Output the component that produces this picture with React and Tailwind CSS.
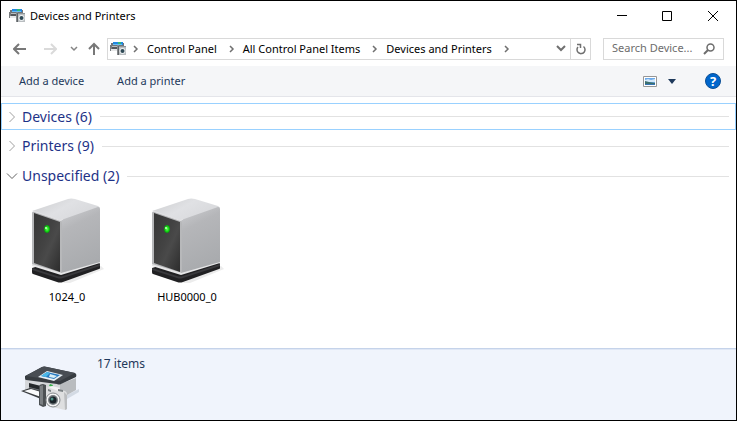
import { useState } from 'react'

const CRUMBS = ['Control Panel', 'All Control Panel Items', 'Devices and Printers']

const GROUPS = [
  { id: 'devices', name: 'Devices', count: 6, items: [] },
  { id: 'printers', name: 'Printers', count: 9, items: [] },
  { id: 'unspecified', name: 'Unspecified', count: 2, items: ['1024_0', 'HUB0000_0'] },
]

// small printer + camera icon
function AppIcon() {
  return (
    <svg width="16" height="14" viewBox="0 0 16 14" className="shrink-0" aria-hidden="true">
      <path d="M1 1h13v3H1z" fill="#6f7478" />
      <path d="M3 0h10v3H3z" fill="#2387e0" />
      <path d="M8 0h3v2H8z" fill="#2fb878" />
      <path d="M3 2h9v1H3z" fill="#67c0f5" />
      <path d="M0 4h15v1H0z" fill="#b9bcbf" />
      <path d="M0 3h2v6H0z" fill="#777b7e" />
      <path d="M2 5h5v2H2z" fill="#54585b" />
      <path d="M1 7h6v2H1z" fill="#e6e7e8" />
      <path d="M7 3h2v10H7z" fill="#85898c" />
      <path d="M8 4h1v9H8z" fill="#5f6366" />
      <path d="M9 4h7v9H9z" fill="#b9bdc0" />
      <path d="M9 4h7v1H9z" fill="#8f9598" />
      <circle cx="12.500" cy="9" r="3" fill="#edf0f1" />
      <circle cx="12.500" cy="9" r="2" fill="#2f4a56" />
    </svg>
  )
}

function Chevron({ className = '' }) {
  return (
    <svg width="6" height="8" viewBox="0 0 6 8" className={className} fill="none" stroke="#707070" strokeWidth="1.500" aria-hidden="true">
      <path d="M1 1l3 3-3 3" />
    </svg>
  )
}

function DeviceIcon() {
  return (
    <svg width="78" height="88" viewBox="0 0 78 88" aria-hidden="true">
      <defs>
        <linearGradient id="top" x1="0" y1="0" x2="1" y2="0.600">
          <stop offset="0" stopColor="#cbccce" />
          <stop offset="0.500" stopColor="#e0e1e4" />
          <stop offset="1" stopColor="#d6d7da" />
        </linearGradient>
        <linearGradient id="side" x1="0" y1="0" x2="0.300" y2="1">
          <stop offset="0" stopColor="#cfd0d3" />
          <stop offset="0.350" stopColor="#b5b6b9" />
          <stop offset="1" stopColor="#a9abae" />
        </linearGradient>
        <linearGradient id="front" x1="0" y1="0" x2="1" y2="1">
          <stop offset="0" stopColor="#363636" />
          <stop offset="0.450" stopColor="#434343" />
          <stop offset="0.600" stopColor="#4a4a4a" />
          <stop offset="1" stopColor="#2c2c2c" />
        </linearGradient>
        <radialGradient id="led">
          <stop offset="0" stopColor="#6dff5d" />
          <stop offset="0.600" stopColor="#14dc14" />
          <stop offset="1" stopColor="#108a14" />
        </radialGradient>
      </defs>
      {/* base */}
      <path d="M34 86l8 0 34-14-3-3z" fill="#ececec" />
      <path d="M4 71l27-8 40 3q1 0 1 1v4q0 1-1 1L35 85q-3 1-6 0L5 77q-1 0-1-2z" fill="#212123" />
      <path d="M4 71l25 8q3 1 6 0l37-12v2L35 81q-3 1-6 0L4 73z" fill="#3a3a3d" />
      {/* case */}
      <path d="M4 66l29 9 39-11v2L33 78 4 69z" fill="#e6e6e7" />
      <path d="M4 14L40 2q3-1 7 0l23 7q2 1 2 3L33 26z" fill="url(#top)" />
      <path d="M32 27q0-4 4-5l34-12q2 0 2 2v53L33 76z" fill="url(#side)" />
      <path d="M4 16q0-2 3-1l24 8q3 1 3 4v49L4 67z" fill="#b7b8ba" />
      <path d="M6 16l26 9v50L6 66z" fill="url(#front)" />
      <path d="M5 14l26 9q2 1 4-1" fill="none" stroke="#e3e3e5" />
      <ellipse cx="19" cy="32" rx="3" ry="4" fill="url(#led)" />
      <ellipse cx="18" cy="31" rx="1" ry="1" fill="#c4ffc0" />
    </svg>
  )
}

function PrinterCameraIcon() {
  return (
    <svg width="60" height="50" viewBox="0 0 60 50" className="shrink-0" aria-hidden="true">
      <path d="M46 30l12-6v3l-12 7z" fill="#d3dae4" />
      {/* printer body */}
      <path d="M4 13l36 6v16L4 25z" fill="#d5d7da" />
      <path d="M39 19l16-6v12l-16 9z" fill="#b9bcbf" />
      <path d="M4 11L21 2q2-1 5 0l28 6q2 1 1 4l-15 7q-2 1-4 0L5 15q-1 0-1-2z" fill="#373c41" />
      <path d="M5 11L21 2q2-1 5 0l28 6-15 8z" fill="#484d53" />
      <path d="M26 6l16 4-9 6-16-4z" fill="#e8f0f5" />
      <path d="M26 7l13 3-6 4-13-3z" fill="#2779c0" />
      <path d="M26 7l3 1-4 4-5-1z" fill="#4bb8e6" />
      <path d="M29 9l7 2-3 2-5-1z" fill="#d9eef5" />
      {/* output tray */}
      <path d="M8 18l12 3v8L8 26z" fill="#25282b" />
      <path d="M8 22l12 3v3L8 25z" fill="#71757a" />
      <path d="M0 26l9-3 11 3v8z" fill="#3b3e41" />
      <path d="M3 26l7-2 10 3v5z" fill="#fafbfc" />
      {/* camera */}
      <path d="M18 21q1-2 4-2l3 1v21l-3 1-4-2z" fill="#4c5053" />
      <path d="M19 21l3-1v20l-3-1z" fill="#7b7f82" />
      <path d="M29 19l3 1-1 2-3-1z" fill="#35b048" />
      <path d="M25 23q0-1 2-1l17 4q2 1 2 3v14q0 2-2 2L27 41q-2-1-2-3z" fill="#dedfe0" />
      <path d="M43 27l3 3v14l-2 1z" fill="#bbbdbf" />
      <path d="M27 22l4-1 8 2-2 3z" fill="#f4f4f4" />
      <path d="M27 24l3 1v2l-3-1zM37 24l5 1v2l-5-1z" fill="#7c8285" />
      <circle cx="32" cy="35" r="7" fill="#f6f6f6" stroke="#85898c" />
      <circle cx="32" cy="35" r="5" fill="#777d81" />
      <circle cx="32" cy="35" r="3.500" fill="#1a2429" />
      <circle cx="31" cy="34" r="1.500" fill="#4d8f86" />
    </svg>
  )
}

function TitleBar() {
  return (
    <header className="flex h-[30px] items-center pl-2">
      <AppIcon />
      <h1 className="ml-[5px] flex-1 text-[11px] text-black">Devices and Printers</h1>
      <button aria-label="Minimize" className="flex h-full w-[45px] items-center justify-center">
        <svg width="10" height="10" viewBox="0 0 10 10" stroke="#000"><path d="M0 4.500h10" /></svg>
      </button>
      <button aria-label="Maximize" className="flex h-full w-[45px] items-center justify-center">
        <svg width="10" height="10" viewBox="0 0 10 10" fill="none" stroke="#000"><path d="M.5.5h9v9h-9z" /></svg>
      </button>
      <button aria-label="Close" className="flex h-full w-[47px] items-center justify-center">
        <svg width="10" height="10" viewBox="0 0 10 10" stroke="#000"><path d="M0 0l10 10M10 0L0 10" /></svg>
      </button>
    </header>
  )
}

function NavBar() {
  return (
    <div className="flex h-[35px] items-center pr-3 pl-3">
      <nav aria-label="History" className="flex items-center">
        <button aria-label="Back" className="w-[14px]">
          <svg width="14" height="12" viewBox="0 0 14 12" fill="none" stroke="#787878" strokeWidth="2"><path d="M13 6H2M6 1L1 6l5 5" /></svg>
        </button>
        <button aria-label="Forward" disabled className="ml-4 w-[14px]">
          <svg width="14" height="12" viewBox="0 0 14 12" fill="none" stroke="#dadada" strokeWidth="2"><path d="M1 6h11M8 1l5 5-5 5" /></svg>
        </button>
        <button aria-label="Recent locations" className="ml-3 w-[10px]">
          <svg width="10" height="6" viewBox="0 0 10 6" fill="none" stroke="#858585" strokeWidth="1.500"><path d="M2 1l3 3 3-3" /></svg>
        </button>
        <button aria-label="Up" className="ml-2 w-[14px]">
          <svg width="14" height="13" viewBox="0 0 14 13" fill="none" stroke="#787878" strokeWidth="2"><path d="M7 13V2M2 7l5-5 5 5" /></svg>
        </button>
      </nav>
      <div className="ml-[6px] flex h-[22px] min-w-0 flex-1 items-center border border-[#d9d9d9] pl-[2px]">
        <AppIcon />
        <Chevron className="ml-[7px] shrink-0" />
        {CRUMBS.map(crumb => (
          <div key={crumb} className="flex shrink-0 items-center">
            <a href="#" className="ml-2 text-[11px] leading-4 text-black">{crumb}</a>
            <Chevron className="ml-3" />
          </div>
        ))}
        <button aria-label="Previous locations" className="ml-auto flex h-full w-[18px] items-center justify-center">
          <svg width="10" height="7" viewBox="0 0 10 7" fill="none" stroke="#707070" strokeWidth="2"><path d="M1 1l4 4 4-4" /></svg>
        </button>
        <button aria-label="Refresh" className="flex h-full w-5 items-center justify-center border-l border-[#d9d9d9]">
          <svg width="10" height="12" viewBox="0 0 10 12" fill="none" stroke="#707070" strokeWidth="1.500">
            <path d="M7.500 3.500A4 4 0 1 1 2 4M1 1.500h3.500V5" />
          </svg>
        </button>
      </div>
      <label className="ml-3 flex h-[22px] w-[121px] items-center border border-[#d9d9d9] pr-2 pl-2">
        <input
          type="text"
          aria-label="Search Devices and Printers"
          placeholder="Search Device..."
          className="w-0 flex-1 text-[11px] text-black outline-none placeholder:text-[#6d6d6d]"
        />
        <svg width="12" height="12" viewBox="0 0 12 12" fill="none" stroke="#6d6d6d" strokeWidth="1.500" aria-hidden="true">
          <circle cx="7.500" cy="4.500" r="3.500" />
          <path d="M5 7l-4 4" strokeWidth="2" />
        </svg>
      </label>
    </div>
  )
}

function CommandBar() {
  return (
    <div className="flex h-[31px] items-center border-b border-[#e4e5ea] bg-[#f5f6f8] pr-[15px] pl-[18px] text-[11px] text-[#1e395b]">
      <button>Add a device</button>
      <button className="ml-[33px]">Add a printer</button>
      <button aria-label="Change view" className="ml-auto">
        <svg width="14" height="11" viewBox="0 0 14 11">
          <path d="M.5.5h13v10H.5z" fill="#fff" stroke="#969696" />
          <path d="M2 2h10v7H2z" fill="#6ba9ea" />
          <path d="M2 4l3-1 3 1 4-1v3H2z" fill="#d3e8fa" />
          <path d="M2 5l4 1 6 1v1H2z" fill="#3c6f6e" />
          <path d="M2 8h10v1H2z" fill="#3876b5" />
        </svg>
      </button>
      <button aria-label="More view options" className="ml-[11px]">
        <svg width="8" height="5" viewBox="0 0 8 5"><path d="M0 0h8L4 5z" fill="#1e395b" /></svg>
      </button>
      <button aria-label="Help" className="ml-[29px]">
        <span className="flex size-4 items-center justify-center rounded-full border border-[#0b4f96] bg-[#0066cc] text-[13px] leading-none font-bold text-white">?</span>
      </button>
    </div>
  )
}

function Group({ group, open, selected, onToggle }) {
  return (
    <section>
      <button
        onClick={onToggle}
        aria-expanded={open}
        className={`flex w-full items-center border pr-[6px] pl-1 ${selected ? 'mb-px h-[27px] border-[#99d1ff]' : 'h-[30px] border-transparent'}`}
      >
        <svg width="12" height="12" viewBox="0 0 12 12" fill="none" stroke={open ? '#636363' : '#a0a0a0'} aria-hidden="true">
          {open ? <path d="M1 3.500l5 5 5-5" /> : <path d="M3.500 1l5 5-5 5" />}
        </svg>
        <span className="ml-1 text-[14px] leading-5 text-[#1e3287]">{group.name} ({group.count})</span>
        <span className="ml-2 h-px flex-1 bg-[#e2e2e2]" />
      </button>
      {open && (
        <ul className="flex gap-2 pt-[6px] pl-[10px]">
          {group.items.map(item => (
            <li key={item} className="flex w-28 flex-col items-center">
              <DeviceIcon />
              <span className="mt-1 text-[11px] leading-4 text-black">{item}</span>
            </li>
          ))}
        </ul>
      )}
    </section>
  )
}

export default function App() {
  const [opened, setOpened] = useState(['unspecified'])

  const toggle = (id) => {
    setOpened(opened.includes(id) ? opened.filter(o => o !== id) : [...opened, id])
  }

  return (
    <div className="flex min-h-screen flex-col border border-black bg-white font-['Noto_Sans','Open_Sans',sans-serif]">
      <TitleBar />
      <NavBar />
      <CommandBar />
      <main className="flex-1 pt-[6px]">
        {GROUPS.map((group, i) => (
          <Group
            key={group.id}
            group={group}
            selected={i === 0}
            open={opened.includes(group.id)}
            onToggle={() => toggle(group.id)}
          />
        ))}
      </main>
      <footer className="flex h-[72px] items-start border-t border-[#c5d3ea] bg-[#f0f4fc] pl-5 shadow-[inset_0_1px_0_#dfe7f5]">
        <div className="pt-4">
          <PrinterCameraIcon />
        </div>
        <p className="ml-4 pt-[7px] text-[12px] leading-4 text-[#1e395b]">17 items</p>
      </footer>
    </div>
  )
}
